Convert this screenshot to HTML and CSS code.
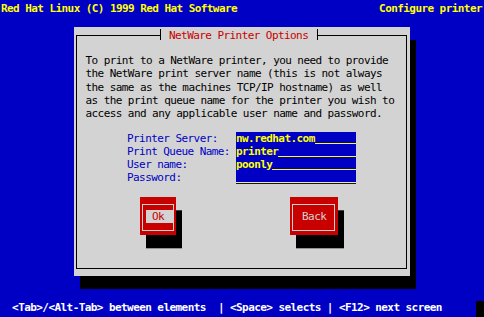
FILE: index.html
```html
<!DOCTYPE html>
<html lang="en">
<head>
    <meta charset="UTF-8">
    <title>Configure printer</title>
    <link rel="stylesheet" href="styles.css">
</head>
<body>
    <div class="screen">
        <div class="topbar">
            <span>Red Hat Linux (C) 1999 Red Hat Software</span>
            <span>Configure printer</span>
        </div>

        <div class="dialog">
            <div class="frame">
                <div class="title">
                    <span class="tick"></span>
                    <span class="title-text">NetWare Printer Options</span>
                    <span class="tick"></span>
                </div>

                <p class="msg">To print to a NetWare printer, you need to provide<br>the NetWare print server name (this is not always<br>the same as the machines TCP/IP hostname) as well<br>as the print queue name for the printer you wish to<br>access and any applicable user name and password.</p>

                <div class="form">
                    <label>Printer Server:</label>
                    <div class="entry"><span class="val">nw.redhat.com</span><span class="fill"></span></div>
                    <label>Print Queue Name:</label>
                    <div class="entry"><span class="val">printer</span><span class="fill"></span></div>
                    <label>User name:</label>
                    <div class="entry"><span class="val">poonly</span><span class="fill"></span></div>
                    <label>Password:</label>
                    <div class="entry"><span class="fill"></span></div>
                </div>

                <div class="buttons">
                    <div class="btn btn-ok">
                        <div class="btn-frame"><span class="btn-label">Ok</span></div>
                    </div>
                    <div class="btn btn-back">
                        <div class="btn-frame"><span class="btn-label">Back</span></div>
                    </div>
                </div>
            </div>
        </div>

        <div class="statusbar">
            <span class="help">  &lt;Tab&gt;/&lt;Alt-Tab&gt; between elements  | &lt;Space&gt; selects | &lt;F12&gt; next screen</span>
            <span class="corner"></span>
        </div>
    </div>
</body>
</html>
```

FILE: styles.css
```css
body {
    margin: 0;
    padding: 0;
    background: #0000c4; /* console blue */
    font-family: 'DejaVu Sans Mono', 'Liberation Mono', monospace;
    font-size: 11px;
    letter-spacing: -0.57px;
    line-height: 13.1px;
}
.screen {
    width: 484px;
    height: 317px;
    display: flex;
    flex-direction: column;
    overflow: hidden;
}
.topbar {
    display: flex;
    justify-content: space-between;
    padding: 1.65px 2px 0 1px;
    color: #ffff00;
    font-weight: bold;
}

/* dialog window */
.dialog {
    margin: 12.25px 0 0 74px;
    width: 336px;
    height: 249px;
    background: #d3d3d3;
    box-shadow: 6px 13px 0 #000;
    display: flex;
    flex-direction: column;
}
.frame {
    flex: 1;
    position: relative;
    margin: 8px 3px 7px 2px;
    border: 1px solid #000;
}
.title {
    position: absolute;
    top: -7px;
    left: 83px;
    display: flex;
    align-items: flex-start;
    background: #d3d3d3;
}
.tick {
    width: 1px;
    height: 11px;
    background: #000;
}
.title-text {
    color: #c80000;
    margin: -0.35px 8.5px 0 8px;
}
.msg {
    margin: 18.35px 0 0 8.5px;
    color: #000;
}

/* entry form */
.form {
    display: grid;
    grid-template-columns: 109px 120px;
    margin: 11.8px 0 0 50px;
}
.form label {
    color: #0000c4;
}
.entry {
    display: flex;
    height: 13.1px;
    background: #0000c4;
}
.val {
    color: #ffff00;
    font-weight: bold;
}
.fill {
    flex: 1;
    border-bottom: 1px solid #ffff00;
    margin-bottom: 1px;
}

/* buttons */
.buttons {
    display: flex;
    gap: 114px;
    margin-top: 12.65px;
    padding-left: 63px;
}
.btn {
    height: 38.6px;
    box-sizing: border-box;
    padding: 7.3px 3px 4.3px 2px;
    background: #c80000;
    box-shadow: 6px 13.3px 0 #000;
    display: flex;
}
.btn-ok {
    width: 36px;
}
.btn-back {
    width: 48px;
}
.btn-frame {
    flex: 1;
    display: flex;
    border: 1px solid #d3d3d3;
}
.btn-label {
    flex-shrink: 0;
    margin: 5px 0 0 3px;
    padding-left: 6.05px;
    height: 13.3px;
    line-height: 13.3px;
    color: #d3d3d3;
}
.btn-ok .btn-label {
    width: 21.25px;
    background: #d3d3d3;
    color: #c80000;
}

/* help line */
.statusbar {
    margin-top: auto;
    display: flex;
    justify-content: space-between;
    color: #fff;
    font-weight: bold;
    padding-bottom: 3.25px;
}
.help {
    white-space: pre;
}
.corner {
    width: 8px;
    margin-bottom: -3.25px;
    background: #000;
}
```
